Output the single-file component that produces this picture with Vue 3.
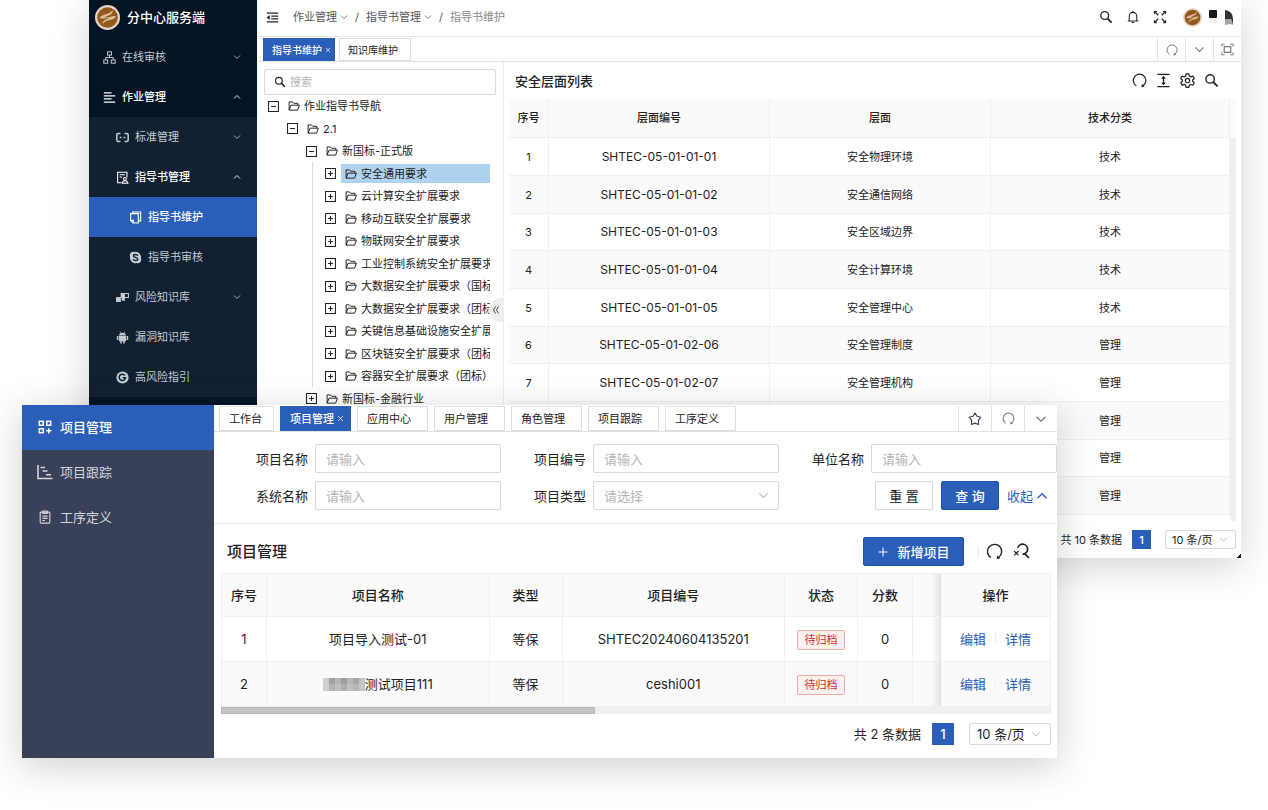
<script setup>
import { h, ref } from 'vue'

const shapes = {
  sitemap: '<g fill="none" stroke="currentColor" stroke-width="1.2"><rect x="5.6" y="1" width="4.8" height="4"/><rect x="1" y="11" width="4.8" height="4"/><rect x="10.2" y="11" width="4.8" height="4"/><path d="M8 5v3M3.4 11V8h9.2v3"/></g>',
  lines: '<path d="M1 2.200h9.500M1 6h14M1 9.800h9.500M1 13.600h14" fill="none" stroke="currentColor" stroke-width="1.500"/>',
  brackets: '<path d="M5.500 3H3Q1 3 1 5v6q0 2 2 2h2.500M10.500 3H13q2 0 2 2v6q0 2-2 2h-2.500M4.500 8h2.300M9.200 8h2.300" fill="none" stroke="currentColor" stroke-width="1.900"/>',
  bookuser: '<g fill="none" stroke="currentColor" stroke-width="1.300"><path d="M7 14.500H2v-13h11.500V8M4.500 4.500h6.500M4.500 7.500h3"/><circle cx="11" cy="9.800" r="1.700"/><path d="M7.800 15q.3-3 3.200-3t3.700 3z"/></g>',
  files: '<g fill="none" stroke="currentColor" stroke-width="1.400"><path d="M4.500 3V1.200h9.800v11h-2.500"/><path d="M2 3.300h9.500v11.500H5L2 12z"/><path d="M2 11.500h3.300v3" /></g>',
  skype: '<path d="M8 1a7 7 0 0 1 6.700 8.600A4 4 0 0 1 9.600 14.800 7 7 0 0 1 1.300 6.400 4 4 0 0 1 6.400 1.200Q7.200 1 8 1z" fill="currentColor"/><path d="M10.800 5.800Q10.200 4.300 8 4.300q-2.600 0-2.600 1.800C5.400 8.400 10.800 7.200 10.800 9.800q0 1.900-2.700 1.900-2.400 0-3-1.700" fill="none" stroke="#122131" stroke-width="1.700"/>',
  boxes: '<path d="M0 7.500h6v6H0z" fill="currentColor"/><path d="M6.500 3h8.800v5H6.500z" fill="none" stroke="currentColor" stroke-width="1.300"/><path d="M6 2.500h5v5.800H6zM7 8h4v4H7z" fill="currentColor"/>',
  android: '<g fill="currentColor"><path d="M3.700 5.500Q4 2 8 2t4.300 3.500zM3.700 6.200h8.600v6.300H3.700zM1 6.200h1.900v5H1zM13.100 6.200H15v5h-1.900zM5.200 11h1.900v4.500H5.200zM8.900 11h1.900v4.500H8.900z"/></g><path d="M5 .8l1 1.800M11 .8l-1 1.800" stroke="currentColor" stroke-width=".8"/>',
  google: '<circle cx="8" cy="8" r="7.500" fill="currentColor"/><path d="M11 5.500A3.900 3.900 0 1 0 11.700 8.300H8.200" fill="none" stroke="#122131" stroke-width="1.900"/>',
  fold: '<path d="M1 2.500h14M6.500 6.200H15M6.500 9.800H15M1 13.500h14" fill="none" stroke="currentColor" stroke-width="1.500"/><path d="M4.500 5v6L.8 8z" fill="currentColor"/>',
  down: '<path d="M2 5l6 6 6-6" fill="none" stroke="currentColor" stroke-width="1.600"/>',
  up: '<path d="M2 11l6-6 6 6" fill="none" stroke="currentColor" stroke-width="1.800"/>',
  search: '<circle cx="6.500" cy="6.300" r="4.500" fill="none" stroke="currentColor" stroke-width="1.500"/><path d="M9.700 9.500l4.800 4.800" stroke="currentColor" stroke-width="2"/>',
  bell: '<path d="M2 12.500h12M3.700 12.500V7a4.300 4.300 0 0 1 8.600 0v5.500M8 1v1.700M6.500 14.300h3" fill="none" stroke="currentColor" stroke-width="1.200"/>',
  expand: '<path d="M2 2l4 4M14 2l-4 4M2 14l4-4M14 14l-4-4" stroke="currentColor" stroke-width="1.400"/><path d="M1 1h4L1 5zM15 1h-4l4 4zM1 15h4l-4-4zM15 15h-4l4-4z" fill="currentColor"/>',
  redo: '<path d="M4.600 13.700A6.700 6.700 0 1 1 12 13.400" fill="none" stroke="currentColor" stroke-width="1.300"/><path d="M10 15.300l.6-3.600 3 2.600z" fill="currentColor"/>',
  height: '<path d="M1.500 1.500h13M1.500 14.500h13M8 4v8" stroke="currentColor" stroke-width="1.400"/><path d="M5.500 6L8 3l2.500 3zM5.500 10L8 13l2.500-3z" fill="currentColor"/>',
  gear: '<g fill="none" stroke="currentColor" stroke-width="1.300" stroke-linejoin="round"><path d="M6.500 1h3l.5 2.200 1.500.9 2.200-.8 1.500 2.600-1.700 1.500v1.500l1.700 1.500-1.500 2.600-2.200-.7-1.500.8-.5 2.200h-3L6 13l-1.500-.8-2.200.7-1.500-2.600 1.700-1.500V7.400L.8 5.900l1.500-2.600 2.200.8L6 3.200z"/><circle cx="8" cy="8.100" r="2.300"/></g>',
  folder: '<path d="M1.500 13.500v-11h4.300l1.800 1.900h5.600v2.500M1.500 13.500L4 6.900h11.200l-2.400 6.600z" fill="none" stroke="currentColor" stroke-width="1.300" stroke-linejoin="round"/>',
  focus: '<path d="M1 4.500v-3h3.500M11.500 1.500H15v3M15 11.500v3h-3.500M4.500 14.500H1v-3" fill="none" stroke="currentColor" stroke-width="1.200"/><rect x="4" y="4.500" width="8" height="7" fill="none" stroke="currentColor" stroke-width="1.500"/>',
  star: '<path d="M8 1.300l2.300 3.500 4.300 1.200-2.700 3.600.1 4.600L8 12.700l-4 1.500.1-4.600L1.400 6l4.300-1.200z" fill="none" stroke="currentColor" stroke-width="1.300" stroke-linejoin="round"/>',
  searchx: '<path d="M4.500 4.500A4.700 4.700 0 1 1 9 10.500M10.500 9.500l4.500 4.500" fill="none" stroke="currentColor" stroke-width="1.600"/><path d="M1 7.500l4.200 4.200M5.200 7.500L1 11.700" stroke="currentColor" stroke-width="1.100"/>',
  gridplus: '<g fill="none" stroke="currentColor" stroke-width="1.700"><rect x="1.500" y="1.500" width="4.500" height="4.500"/><rect x="10" y="1.500" width="4.500" height="4.500"/><rect x="1.500" y="10" width="4.500" height="4.500"/><path d="M12.300 9.300v6M9.300 12.300h6"/></g>',
  gantt: '<path d="M1 1v13.500h14.500M3.500 3.500h4.500M5.500 7h5M9 10.700h5" fill="none" stroke="currentColor" stroke-width="1.600"/>',
  clipboard: '<g fill="none" stroke="currentColor" stroke-width="1.300"><rect x="2.500" y="2.500" width="11" height="12.500" rx="1"/><path d="M5.500 1.200h5v2.600h-5zM5 7h6M5 9.500h6M5 12h3"/></g>',
  plus: '<path d="M8 2v12M2 8h12" stroke="currentColor" stroke-width="1.400"/>',
  close: '<path d="M2.500 2.500l11 11M13.500 2.500l-11 11" stroke="currentColor" stroke-width="1.800"/>',
  left2: '<path d="M7 1L3 8l4 7M13 1L9 8l4 7" fill="none" stroke="currentColor" stroke-width="1.600"/>',
  plusbox: '<path d="M.8.800h14.400v14.400H.8zM8 4.500v7M4.500 8h7" fill="none" stroke="currentColor" stroke-width="1.500"/>',
  minusbox: '<path d="M.8.800h14.400v14.400H.8zM4.500 8h7" fill="none" stroke="currentColor" stroke-width="1.500"/>',
  emblem: '<circle cx="8" cy="8" r="8" fill="#e6d5cb"/><circle cx="8" cy="8" r="6.600" fill="#94591c"/><path d="M2.800 8.300C4.500 5.500 9 6.300 11.300 3.300c.5 2.300-1.800 3-5.300 4.600 2.300.6 5.500-1.200 7.400-.7-1.500 3.300-6 1.600-8.700 5 .1-2.300 2.500-3 4.800-4.200-2.200.2-4.300 1.300-6.700.3z" fill="#dcbf9f"/>'
}
const Icon = (p) =>
  h('svg', { viewBox: '0 0 16 16', width: p.s, height: p.s, 'aria-hidden': 'true', innerHTML: shapes[p.n] })

const menu = [
  { t: '在线审核', i: 'sitemap', l: 1, c: 'down' },
  { t: '作业管理', i: 'lines', l: 1, c: 'up', open: true },
  { t: '标准管理', i: 'brackets', l: 2, c: 'down' },
  { t: '指导书管理', i: 'bookuser', l: 2, c: 'up', open: true },
  { t: '指导书维护', i: 'files', l: 3, on: true },
  { t: '指导书审核', i: 'skype', l: 3 },
  { t: '风险知识库', i: 'boxes', l: 2, c: 'down' },
  { t: '漏洞知识库', i: 'android', l: 2 },
  { t: '高风险指引', i: 'google', l: 2 }
]
const tree = [
  { t: '作业指导书导航', l: 0, open: true },
  { t: '2.1', l: 1, open: true },
  { t: '新国标-正式版', l: 2, open: true },
  { t: '安全通用要求', l: 3, on: true },
  { t: '云计算安全扩展要求', l: 3 },
  { t: '移动互联安全扩展要求', l: 3 },
  { t: '物联网安全扩展要求', l: 3 },
  { t: '工业控制系统安全扩展要求', l: 3 },
  { t: '大数据安全扩展要求（国标）', l: 3 },
  { t: '大数据安全扩展要求（团标）', l: 3 },
  { t: '关键信息基础设施安全扩展要求', l: 3 },
  { t: '区块链安全扩展要求（团标）', l: 3 },
  { t: '容器安全扩展要求（团标）', l: 3 },
  { t: '新国标-金融行业', l: 2 }
]
const layers = [
  ['1', 'SHTEC-05-01-01-01', '安全物理环境', '技术'],
  ['2', 'SHTEC-05-01-01-02', '安全通信网络', '技术'],
  ['3', 'SHTEC-05-01-01-03', '安全区域边界', '技术'],
  ['4', 'SHTEC-05-01-01-04', '安全计算环境', '技术'],
  ['5', 'SHTEC-05-01-01-05', '安全管理中心', '技术'],
  ['6', 'SHTEC-05-01-02-06', '安全管理制度', '管理'],
  ['7', 'SHTEC-05-01-02-07', '安全管理机构', '管理'],
  ['', '', '', '管理'],
  ['', '', '', '管理'],
  ['', '', '', '管理']
]
const sections = [
  { t: '项目管理', i: 'gridplus', on: true },
  { t: '项目跟踪', i: 'gantt' },
  { t: '工序定义', i: 'clipboard' }
]
const tabs = ['工作台', '项目管理', '应用中心', '用户管理', '角色管理', '项目跟踪', '工序定义']
const projects = [
  { name: '项目导入测试-01', code: 'SHTEC20240604135201' },
  { name: '测试项目111', code: 'ceshi001', masked: true }
]
const mosaic = ['#cfcfcf', '#a2a2a2', '#b5b5b5', '#9d9d9d', '#b8b8b8', '#a6a6a6', '#c2c2c2']
const size = ref('10 条/页')
</script>

<template>
  <div class="desktop">
    <div class="win back">
      <aside class="side">
        <div class="brand"><Icon n="emblem" s="25" />分中心服务端</div>
        <nav>
          <component
            :is="m.c ? 'button' : 'a'"
            v-for="m in menu"
            :key="m.t"
            :href="m.c ? null : '#'"
            class="item"
            :class="['l' + m.l, { on: m.on, open: m.open }]"
          >
            <Icon :n="m.i" s="13" /><span class="grow">{{ m.t }}</span><Icon v-if="m.c" :n="m.c" s="8" />
          </component>
        </nav>
      </aside>

      <div class="main">
        <header class="top">
          <button class="ib" aria-label="收起菜单"><Icon n="fold" s="13" /></button>
          <nav class="crumbs">
            <a href="#">作业管理<Icon n="down" s="8" /></a><i>/</i>
            <a href="#">指导书管理<Icon n="down" s="8" /></a><i>/</i>
            <span>指导书维护</span>
          </nav>
          <div class="actions">
            <button class="ib" aria-label="查找"><Icon n="search" s="14" /></button>
            <button class="ib" aria-label="通知"><Icon n="bell" s="14" /></button>
            <button class="ib" aria-label="全屏"><Icon n="expand" s="14" /></button>
          </div>
          <div class="user">
            <Icon n="emblem" s="19" />
            <svg width="25" height="18" viewBox="0 0 25 18" aria-hidden="true">
              <rect x="0" y="2" width="8" height="8" rx="1" fill="#15171a" />
              <rect x="0" y="10" width="8" height="5" fill="#f0f0f0" />
              <path d="M16 2q8 1 8 9h-8z" fill="#303236" /><path d="M16 11h8v6l-3-1-5 1z" fill="#a5a5a5" /><path d="M22 10l2 6v-6z" fill="#303236" />
            </svg>
          </div>
        </header>
        <div class="tabbar small">
          <button class="tab on">指导书维护<Icon n="close" s="6" /></button>
          <button class="tab">知识库维护</button>
          <div class="tools">
            <button aria-label="刷新"><Icon n="redo" s="12" /></button>
            <button aria-label="更多"><Icon n="down" s="11" /></button>
            <button aria-label="专注"><Icon n="focus" s="13" /></button>
          </div>
        </div>

        <div class="content">
          <section class="treepane">
            <label class="find"><Icon n="search" s="12" /><input type="text" placeholder="搜索" aria-label="搜索" /></label>
            <ul class="tree">
              <li v-for="(n, k) in tree" :key="k" :class="'t' + n.l">
                <button class="ib" aria-label="展开或收起"><Icon :n="n.open ? 'minusbox' : 'plusbox'" s="11" /></button>
                <a href="#" :class="{ on: n.on }"><Icon n="folder" s="12" />{{ n.t }}</a>
              </li>
            </ul>
            <button class="handle" aria-label="收起导航"><Icon n="left2" s="8" /></button>
          </section>

          <section class="list">
            <div class="listhead">
              <h2>安全层面列表</h2>
              <button class="ib" aria-label="刷新"><Icon n="redo" s="15" /></button>
              <button class="ib" aria-label="密度"><Icon n="height" s="15" /></button>
              <button class="ib" aria-label="设置"><Icon n="gear" s="15" /></button>
              <button class="ib" aria-label="查找"><Icon n="search" s="15" /></button>
            </div>
            <div class="scroller">
              <table class="layers">
                <thead>
                  <tr><th class="no">序号</th><th class="wide">层面编号</th><th class="wide">层面</th><th>技术分类</th></tr>
                </thead>
                <tbody>
                  <tr v-for="(r, k) in layers" :key="k">
                    <td v-for="(c, j) in r" :key="j" :class="{ code: j === 1 }">{{ c }}</td>
                  </tr>
                </tbody>
              </table>
              <div class="track"></div>
            </div>
            <div class="pager small">
              <span>共 10 条数据</span><button class="page">1</button>
              <label class="pick"><select v-model="size" aria-label="每页条数"><option>10 条/页</option></select><Icon n="down" s="9" /></label>
            </div>
          </section>
        </div>
      </div>
    </div>

    <div class="win front">
      <nav class="side2">
        <a v-for="s in sections" :key="s.t" href="#" :class="{ on: s.on }"><Icon :n="s.i" :s="s.i === 'gantt' ? 16 : 14" />{{ s.t }}</a>
      </nav>
      <div class="main">
        <div class="tabbar">
          <button v-for="(t, k) in tabs" :key="t" class="tab" :class="{ on: k === 1, home: k === 0 }">{{ t }}<Icon v-if="k === 1" n="close" s="7" /></button>
          <div class="tools">
            <button class="dark" aria-label="收藏"><Icon n="star" s="14" /></button>
            <button aria-label="刷新"><Icon n="redo" s="13" /></button>
            <button aria-label="更多"><Icon n="down" s="12" /></button>
          </div>
        </div>

        <form class="filters" @submit.prevent>
          <div class="field"><label for="f1">项目名称</label><input id="f1" type="text" placeholder="请输入" /></div>
          <div class="field"><label for="f2">项目编号</label><input id="f2" type="text" placeholder="请输入" /></div>
          <div class="field"><label for="f3">单位名称</label><input id="f3" type="text" placeholder="请输入" /></div>
          <div class="field"><label for="f4">系统名称</label><input id="f4" type="text" placeholder="请输入" /></div>
          <div class="field">
            <label for="f5">项目类型</label>
            <span class="choose"><select id="f5"><option>请选择</option></select><Icon n="down" s="11" /></span>
          </div>
          <div class="buttons">
            <button type="reset" class="btn">重 置</button>
            <button class="btn primary">查 询</button>
            <a href="#">收起<Icon n="up" s="12" /></a>
          </div>
        </form>

        <section class="projects">
          <div class="phead">
            <h2>项目管理</h2>
            <button class="btn primary add"><Icon n="plus" s="12" />新增项目</button>
            <span class="sep"></span>
            <button class="ib" aria-label="刷新"><Icon n="redo" s="17" /></button>
            <button class="ib" aria-label="清除查找"><Icon n="searchx" s="17" /></button>
          </div>
          <table class="ptable">
            <colgroup><col class="c1" /><col /><col class="c3" /><col /><col class="c3" /><col class="c6" /><col class="c7" /><col class="c8" /></colgroup>
            <thead>
              <tr><th>序号</th><th>项目名称</th><th>类型</th><th>项目编号</th><th>状态</th><th>分数</th><th class="edge"></th><th>操作</th></tr>
            </thead>
            <tbody>
              <tr v-for="(p, k) in projects" :key="k">
                <td>{{ k + 1 }}</td>
                <td>
                  <span class="name">
                    <svg v-if="p.masked" width="42" height="13" viewBox="0 0 42 13" aria-hidden="true">
                      <rect v-for="(c, j) in mosaic" :key="j" :x="j * 6" y="0" width="6" height="13" :fill="c" />
                      <rect x="0" y="6" width="42" height="7" fill="#ccc" opacity=".4" />
                    </svg>{{ p.name }}
                  </span>
                </td>
                <td>等保</td>
                <td>{{ p.code }}</td>
                <td><span class="tag">待归档</span></td>
                <td>0</td>
                <td class="edge"></td>
                <td><span class="ops"><a href="#">编辑</a><i></i><a href="#">详情</a></span></td>
              </tr>
            </tbody>
          </table>
          <div class="hbar"><div></div></div>
          <div class="pager">
            <span>共 2 条数据</span><button class="page">1</button>
            <label class="pick"><select v-model="size" aria-label="每页条数"><option>10 条/页</option></select><Icon n="down" s="10" /></label>
          </div>
        </section>
      </div>
    </div>
  </div>
</template>

<style>
body { margin: 0; background: #fff; }
</style>

<style scoped>
* { box-sizing: border-box; }
.desktop {
  position: relative; min-height: 100vh; overflow: hidden; background: #fff;
  font-family: Inter, "Noto Sans CJK SC", sans-serif; font-size: 11px; line-height: 16px; color: #222;
}
button, input, select { font: inherit; color: inherit; margin: 0; }
button { border: 0; padding: 0; background: none; cursor: pointer; }
a { color: inherit; text-decoration: none; }
h2 { margin: 0; font-weight: 500; }
i { font-style: normal; }
svg { flex: none; display: block; }
ul { list-style: none; margin: 0; padding: 0; }
.ib { display: flex; align-items: center; }
.win { display: flex; background: #fff; }
.main { flex: 1; min-width: 0; }
.back { position: relative; margin: 0 27px 0 89px; box-shadow: 0 8px 36px rgba(40, 35, 30, .2); }
.back::after {
  content: ""; position: absolute; right: 0; bottom: 0; width: 5px; height: 4px;
  background: linear-gradient(to bottom right, transparent 50%, #222 50%);
}
.front {
  position: absolute; left: 22px; right: 211px; top: 405px;
  font-size: 13px; line-height: 20px; box-shadow: 0 8px 36px rgba(40, 35, 30, .22);
}

.side { width: 168px; background: #031425; color: #c5cbd2; }
.brand { display: flex; align-items: center; gap: 7px; height: 37px; padding: 0 0 3px 6px; color: #fff; font-size: 13px; font-weight: 500; }
.item { display: flex; align-items: center; gap: 6px; width: 100%; height: 40px; padding: 0 16px 0 14px; text-align: left; }
.item.l2, .item.l3 { background: #122131; }
.item.l2 { padding-left: 27px; }
.item.l3 { padding-left: 40px; }
.grow { flex: 1; }
.item.open { color: #fff; font-weight: 500; }
.item.on { background: #2a5eb8; color: #fff; font-weight: 500; }

.top { display: flex; align-items: center; height: 37px; padding: 0 7px 2px 9px; border-bottom: 1px solid #e8e8e8; }
.crumbs { display: flex; align-items: center; gap: 7px; flex: 1; margin-left: 14px; color: #555; }
.crumbs a { display: flex; align-items: center; gap: 3px; }
.crumbs span { color: #888; }
.actions { display: flex; gap: 13px; margin-right: 16px; }
.user { display: flex; align-items: center; gap: 7px; }

.tabbar { display: flex; align-items: flex-start; gap: 6px; height: 27px; padding: 1px 0 0 5px; border-bottom: 1px solid #e2e2e2; font-size: 11px; }
.tab { display: flex; align-items: center; gap: 3px; height: 25px; width: 71px; padding-left: 9px; border: 1px solid #dedede; background: #fff; white-space: nowrap; }
.tab.home { width: 55px; }
.tab.on { background: #2a5eb8; border-color: #2a5eb8; color: #fff; font-weight: 500; }
.tools { display: flex; margin-left: auto; height: 100%; color: #777; }
.tools button { display: flex; align-items: center; justify-content: center; width: 33px; border-left: 1px solid #e2e2e2; }
.tools .dark { color: #333e52; }
.small.tabbar { height: 25px; gap: 4px; padding-left: 6px; font-size: 10px; }
.small .tab { height: 23px; width: 72px; padding-left: 8px; }
.small .tools button { width: 28px; }

.content { display: flex; }
.treepane { position: relative; width: 247px; padding: 7px; border-right: 1px solid #ececec; }
.find { display: flex; align-items: center; gap: 4px; height: 26px; padding: 0 9px; border: 1px solid #dcdcdc; border-radius: 2px; }
.find input { flex: 1; min-width: 0; border: 0; padding: 0; outline: 0; background: none; }
input::placeholder { color: #b5b5b5; opacity: 1; }
.tree { margin-right: 6px; overflow: hidden; }
.tree li { display: flex; align-items: center; height: 22px; padding-left: 4px; white-space: nowrap; }
.tree li:nth-child(2n) { height: 23px; }
.tree .t1 { padding-left: 23px; }
.tree .t2 { padding-left: 42px; }
.tree .t3 { padding-left: 61px; background: linear-gradient(#ddd, #ddd) 48px 0 / 1px 100% no-repeat; }
.tree a { display: flex; align-items: center; flex: 1; gap: 4px; height: 19px; margin-left: 5px; padding-left: 4px; overflow: hidden; }
.tree a.on { background: #afd2ee; }
.handle { position: absolute; right: 0; top: 236px; width: 14px; height: 24px; padding-left: 3px; border-radius: 12px 0 0 12px; background: #eee; }

.list { flex: 1; min-width: 0; padding: 0 5px; }
.listhead { display: flex; align-items: center; gap: 9px; height: 37px; padding: 0 17px 0 6px; }
.listhead h2 { flex: 1; font-size: 13px; }
.scroller { display: flex; }
table { border-collapse: separate; border-spacing: 0; table-layout: fixed; width: 100%; text-align: center; }
th, td { padding: 0; border-right: 1px solid #f0f0f0; border-bottom: 1px solid #f0f0f0; }
th { background: #fafafa; font-weight: 500; }
tbody tr:nth-child(2n) td { background: #fafafa; }
.layers th { height: 39px; }
.layers td { height: 38px; }
.layers tr:nth-child(3n) td { height: 37px; }
.layers .code { font-size: 12px; }
.no { width: 40px; }
.wide { width: 221px; }
.track { width: 6px; margin-bottom: -6px; background: #efefef; border-top: 39px solid #fafafa; }

.pager { display: flex; align-items: center; justify-content: flex-end; height: 44px; padding-bottom: 4px; }
.page { width: 22px; height: 22px; margin: 0 15px 0 11px; background: #2a5eb8; color: #fff; font-weight: 500; }
.pick, .choose { position: relative; display: flex; color: #222; }
.pick select, .choose select { appearance: none; width: 100%; border: 1px solid #d9d9d9; border-radius: 2px; background: #fff; outline: 0; }
.pick select { width: 82px; height: 22px; padding: 0 7px; }
.pick svg { position: absolute; right: 10px; top: 6px; color: #bbb; pointer-events: none; }
.small.pager { height: 37px; margin-top: 6px; padding: 0; }
.small .page { width: 19px; height: 19px; margin: 0 14px 0 10px; }
.small .pick select { width: 71px; height: 19px; padding: 0 6px; }
.small .pick svg { right: 8px; top: 5px; }

.side2 { width: 192px; background: #384158; color: #d3d6dc; }
.side2 a { display: flex; align-items: center; gap: 8px; height: 45px; padding: 0 0 1px 16px; }
.side2 a:nth-child(2) { padding-left: 15px; gap: 7px; }
.side2 .on { background: #2a5eb8; color: #fff; font-weight: 500; }

.filters { display: grid; grid-template-columns: repeat(3, minmax(0, 1fr)); gap: 8px 0; padding: 12px 0 13px 9px; border-bottom: 1px solid #e8e8e8; }
.field { display: flex; align-items: center; }
.field label { width: 92px; padding-right: 7px; text-align: right; }
.field input, .choose { flex: 1; min-width: 0; }
.field input, .choose select { height: 29px; padding: 0 10px; border: 1px solid #d9d9d9; border-radius: 2px; outline: 0; }
.choose select { color: #b5b5b5; }
.choose svg { position: absolute; right: 10px; top: 9px; color: #bbb; pointer-events: none; }
.buttons { display: flex; align-items: center; justify-content: flex-end; gap: 8px; padding-right: 9px; color: #2a5eb8; }
.buttons a { display: flex; align-items: center; gap: 3px; }
.btn { width: 58px; height: 29px; border: 1px solid #d9d9d9; border-radius: 2px; background: #fff; color: #222; }
.btn.primary { background: #2a5eb8; border-color: #1d52af; color: #fff; font-weight: 500; }

.projects { padding: 0 6px 0 7px; }
.phead { display: flex; align-items: center; height: 49px; padding: 13px 21px 7px 6px; }
.phead h2 { flex: 1; font-size: 15px; }
.btn.add { display: flex; align-items: center; justify-content: center; gap: 8px; width: 101px; }
.sep { width: 1px; height: 12px; margin: 0 7px 0 14px; background: #e8e8e8; }
.phead .ib + .ib { margin-left: 10px; }
.ptable { border-top: 1px solid #f0f0f0; border-left: 1px solid #f0f0f0; }
.ptable th { height: 43px; }
.ptable td { height: 45px; }
.c1 { width: 45px; }
.c3 { width: 73px; }
.c6 { width: 55px; }
.c7 { width: 28px; }
.c8 { width: 110px; }
.ptable .edge { border-right-color: #e2e2e2; background-image: linear-gradient(to left, rgba(0, 0, 0, .08), transparent 9px); }
.name, .ops { display: flex; align-items: center; justify-content: center; }
.ops { color: #2a5eb8; }
.ops i { width: 1px; height: 12px; margin: 0 9px; background: #eee; }
.tag { display: inline-block; width: 48px; height: 20px; border: 1px solid #f3aaa6; border-radius: 2px; background: #fdf1f0; color: #c9302c; font-size: 11px; line-height: 18px; }
.hbar { height: 7px; background: #f0f0f0; }
.hbar div { width: 45%; height: 7px; border: 1px solid #b8b8b8; background: #c4c4c4; }
</style>
